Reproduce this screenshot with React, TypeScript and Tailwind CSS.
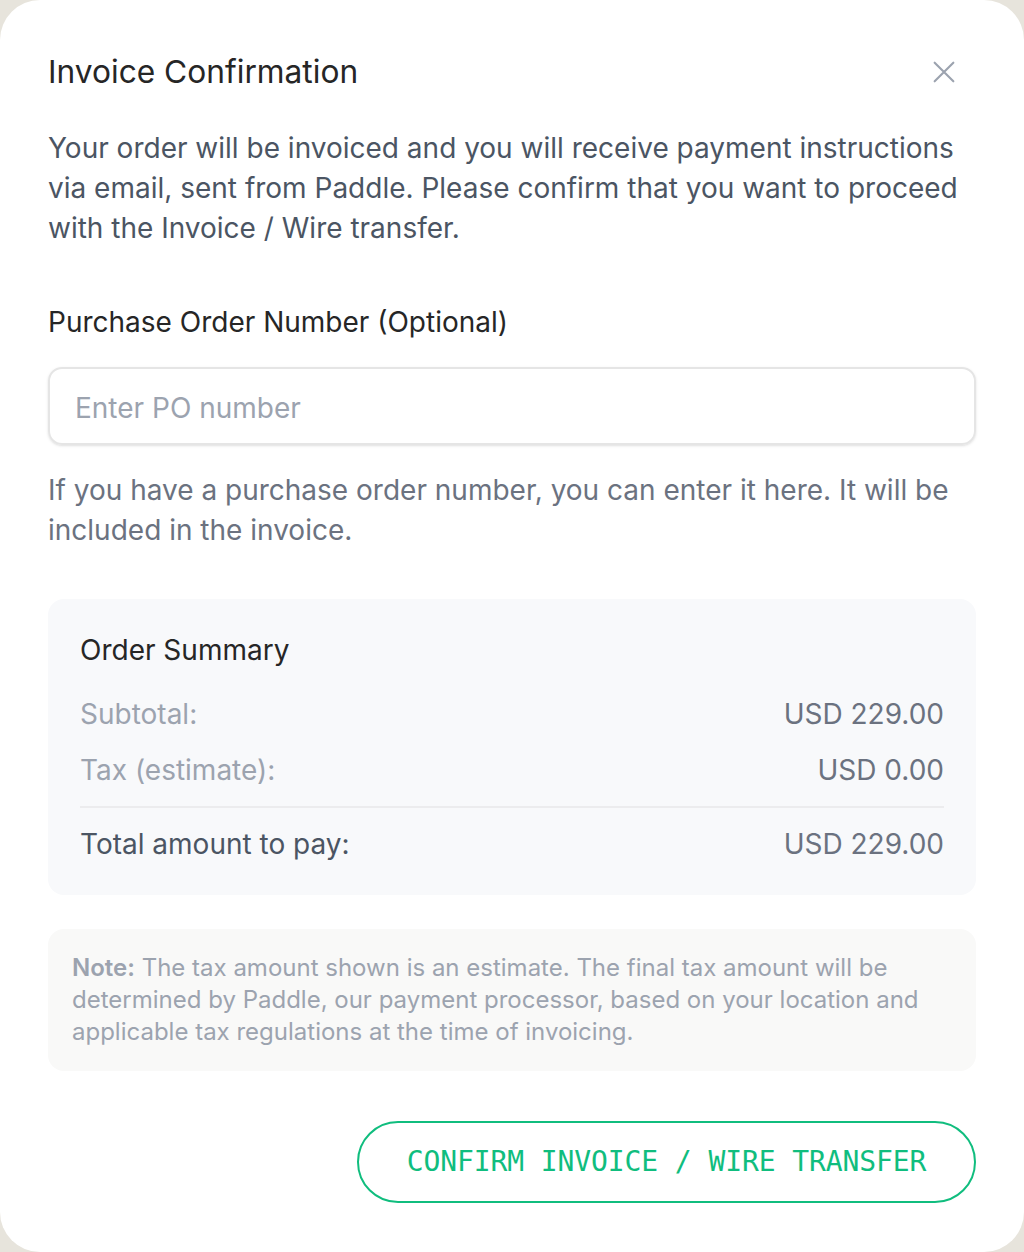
import React, { type FC } from 'react';

const App: FC = () => {
  return (
    <div className="min-h-[1252px] bg-[#e7e4dc]" style={{ fontFamily: 'Inter, "Noto Sans", sans-serif' }}>
      <div className="bg-white rounded-[40px] min-h-[1252px] px-12 pt-12 pb-[49px]">
        <div className="flex items-center justify-between h-12">
          <h1 className="text-[31.7px] leading-[48px] text-[#262626] font-normal">Invoice Confirmation</h1>
          <button className="w-8 h-8 flex items-center justify-center text-[#9ca3af] mr-4">
            <svg width="32" height="32" viewBox="0 0 24 24" fill="none" stroke="currentColor" strokeWidth="1.6" strokeLinecap="round">
              <path d="M5 5l14 14M19 5L5 19" />
            </svg>
          </button>
        </div>

        <p className="mt-8 text-[28px] leading-[40px] text-[#4b5563]">
          Your order will be invoiced and you will receive payment instructions via email, sent from Paddle. Please confirm that you want to proceed with the Invoice / Wire transfer.
        </p>

        {/* PO number */}
        <div className="mt-[54px]">
          <label htmlFor="po" className="block text-[28px] leading-[40px] text-[#262626]">
            Purchase Order Number (Optional)
          </label>
          <input
            id="po"
            placeholder="Enter PO number"
            className="mt-[25px] w-full h-[78px] rounded-[14px] border-2 border-[#e5e5e5] px-[25px] pt-1 text-[28px] text-[#262626] placeholder:text-[#9ca3af] shadow-sm outline-none"
          />
          <p className="mt-[25px] text-[28px] leading-[40px] text-[#6b7280]">
            If you have a purchase order number, you can enter it here. It will be included in the invoice.
          </p>
        </div>

        {/* summary */}
        <section className="mt-[49px] bg-[#f8f9fb] rounded-[16px] px-8 pt-[31px] pb-[31px]">
          <h2 className="text-[28px] leading-[40px] text-[#262626]">Order Summary</h2>
          <div className="mt-6 flex flex-col gap-4">
            <div className="flex justify-between text-[28px] leading-[40px]">
              <span className="text-[#9ca3af]">Subtotal:</span>
              <span className="text-[#6b7280]">USD 229.00</span>
            </div>
            <div className="flex justify-between text-[28px] leading-[40px]">
              <span className="text-[#9ca3af]">Tax (estimate):</span>
              <span className="text-[#6b7280]">USD 0.00</span>
            </div>
          </div>
          <div className="mt-4 pt-4 border-t-2 border-[#ececee] flex justify-between text-[28px] leading-[40px]">
            <span className="text-[#4b5563]">Total amount to pay:</span>
            <span className="text-[#6b7280]">USD 229.00</span>
          </div>
        </section>

        {/* note */}
        <div className="mt-[34px] bg-[#f9f9f8] rounded-[16px] px-6 py-[23px]">
          <p className="text-[24px] leading-[32px] text-[#9ca3af]">
            <strong className="font-semibold">Note:</strong> The tax amount shown is an estimate. The final tax amount will be determined by Paddle, our payment processor, based on your location and applicable tax regulations at the time of invoicing.
          </p>
        </div>

        <div className="mt-[50px] flex justify-end">
          <button
            className="h-[82px] w-[619px] rounded-full border-2 border-[#10bd7e] text-[#10bd7e] text-[28px] tracking-[-0.1px]"
            style={{ fontFamily: '"DejaVu Sans Mono", monospace' }}
          >
            CONFIRM INVOICE / WIRE TRANSFER
          </button>
        </div>
      </div>
    </div>
  );
};

export default App;
